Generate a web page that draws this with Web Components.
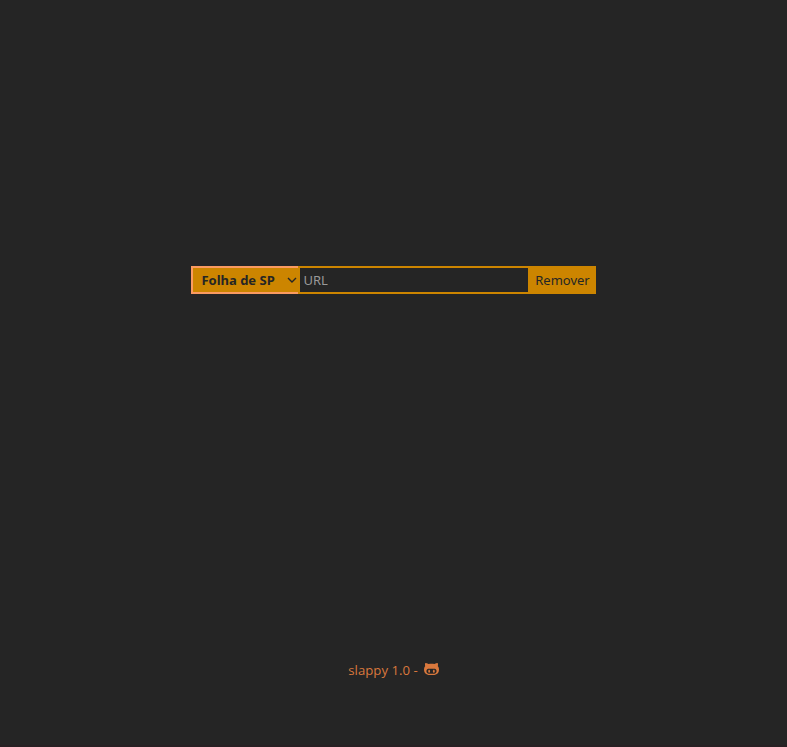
<!DOCTYPE html>
<html lang="pt-BR">
<head>
<meta charset="utf-8">
<title>slappy</title>
<style>
html,body{margin:0;height:100%;background:#252525}
body{font:13px "Noto Sans",sans-serif;overflow:hidden}
</style>
</head>
<body>
<slappy-app></slappy-app>
<script>
const define=(name,html)=>customElements.define(name,class extends HTMLElement{
  constructor(){super();this.attachShadow({mode:'open'}).innerHTML=html;}
});
define('source-select',`<style>
:host{display:flex;align-items:center;box-sizing:border-box;width:107px;height:28px;border:2px solid #fb9b61;border-right:0;background:#cc8500;color:#252525;font-weight:700;padding-left:8.4px}
svg{margin-left:auto;margin-right:1px;flex:none}
</style><slot></slot><svg width="11" height="10" viewBox="0 0 11 10" fill="none" stroke="#252525" stroke-width="1.4"><path d="M2 3l4 4 4-4"/></svg>`);
define('url-field',`<style>
:host{display:block;width:232px;height:28px}
input{display:block;box-sizing:border-box;width:100%;height:100%;margin:0;border:2px solid #cc8500;border-radius:0;background:#252525;color:#aaa;font:inherit;padding:1px 3.5px;outline:0}
input::placeholder{color:#999;opacity:1}
</style><input type="text" placeholder="URL">`);
define('action-button',`<style>
:host{display:block;width:66px;height:28px}
button{display:block;width:100%;height:100%;border:0;margin:0;padding:0 1px 0 0;background:#cc8500;color:#252525;font:inherit}
</style><button type="button"><slot></slot></button>`);
define('slappy-footer',`<style>
:host{display:flex;justify-content:center;height:18px;line-height:18px;color:#d9783d;font-family:"Open Sans",sans-serif;font-size:13.2px}
svg{margin-left:6px}
</style><slot></slot><svg width="15" height="15" viewBox="0 0 16 16" fill="#d9783d"><path fill-rule="evenodd" d="M14.7 5.34c.13-.32.55-1.59-.13-3.31 0 0-1.05-.33-3.44 1.3-1-.28-2.07-.32-3.13-.32s-2.13.04-3.13.32c-2.39-1.64-3.44-1.3-3.44-1.3-.68 1.72-.26 2.99-.13 3.31C.49 6.21 0 7.33 0 8.69 0 13.84 3.33 15 7.98 15S16 13.84 16 8.69c0-1.36-.49-2.48-1.3-3.35zM8 13.7c-3.3 0-5.4-.15-5.4-3.05 0-.7.3-1.45.85-1.95.95-.85 2.6-.45 4.55-.45s3.6-.4 4.55.45c.55.5.85 1.25.85 1.95 0 2.9-2.1 3.05-5.4 3.05zM5.49 9.4c-.6 0-1 .7-1 1.6s.4 1.6 1 1.6 1-.7 1-1.6-.4-1.6-1-1.6zm5.02 0c-.6 0-1 .7-1 1.6s.4 1.6 1 1.6 1-.7 1-1.6-.4-1.6-1-1.6z"/></svg>`);
define('slappy-app',`<style>
:host{display:grid;box-sizing:border-box;height:747px;grid-template-rows:28px 18px;row-gap:367px;padding-top:266px;background:#252525;border-bottom:2px solid #282023}
form{display:flex;justify-content:center;width:405px;margin:0 auto 0 191px}
</style><form><source-select>Folha de SP</source-select><url-field></url-field><action-button>Remover</action-button></form><slappy-footer>slappy 1.0 -</slappy-footer>`);
</script>
</body>
</html>
